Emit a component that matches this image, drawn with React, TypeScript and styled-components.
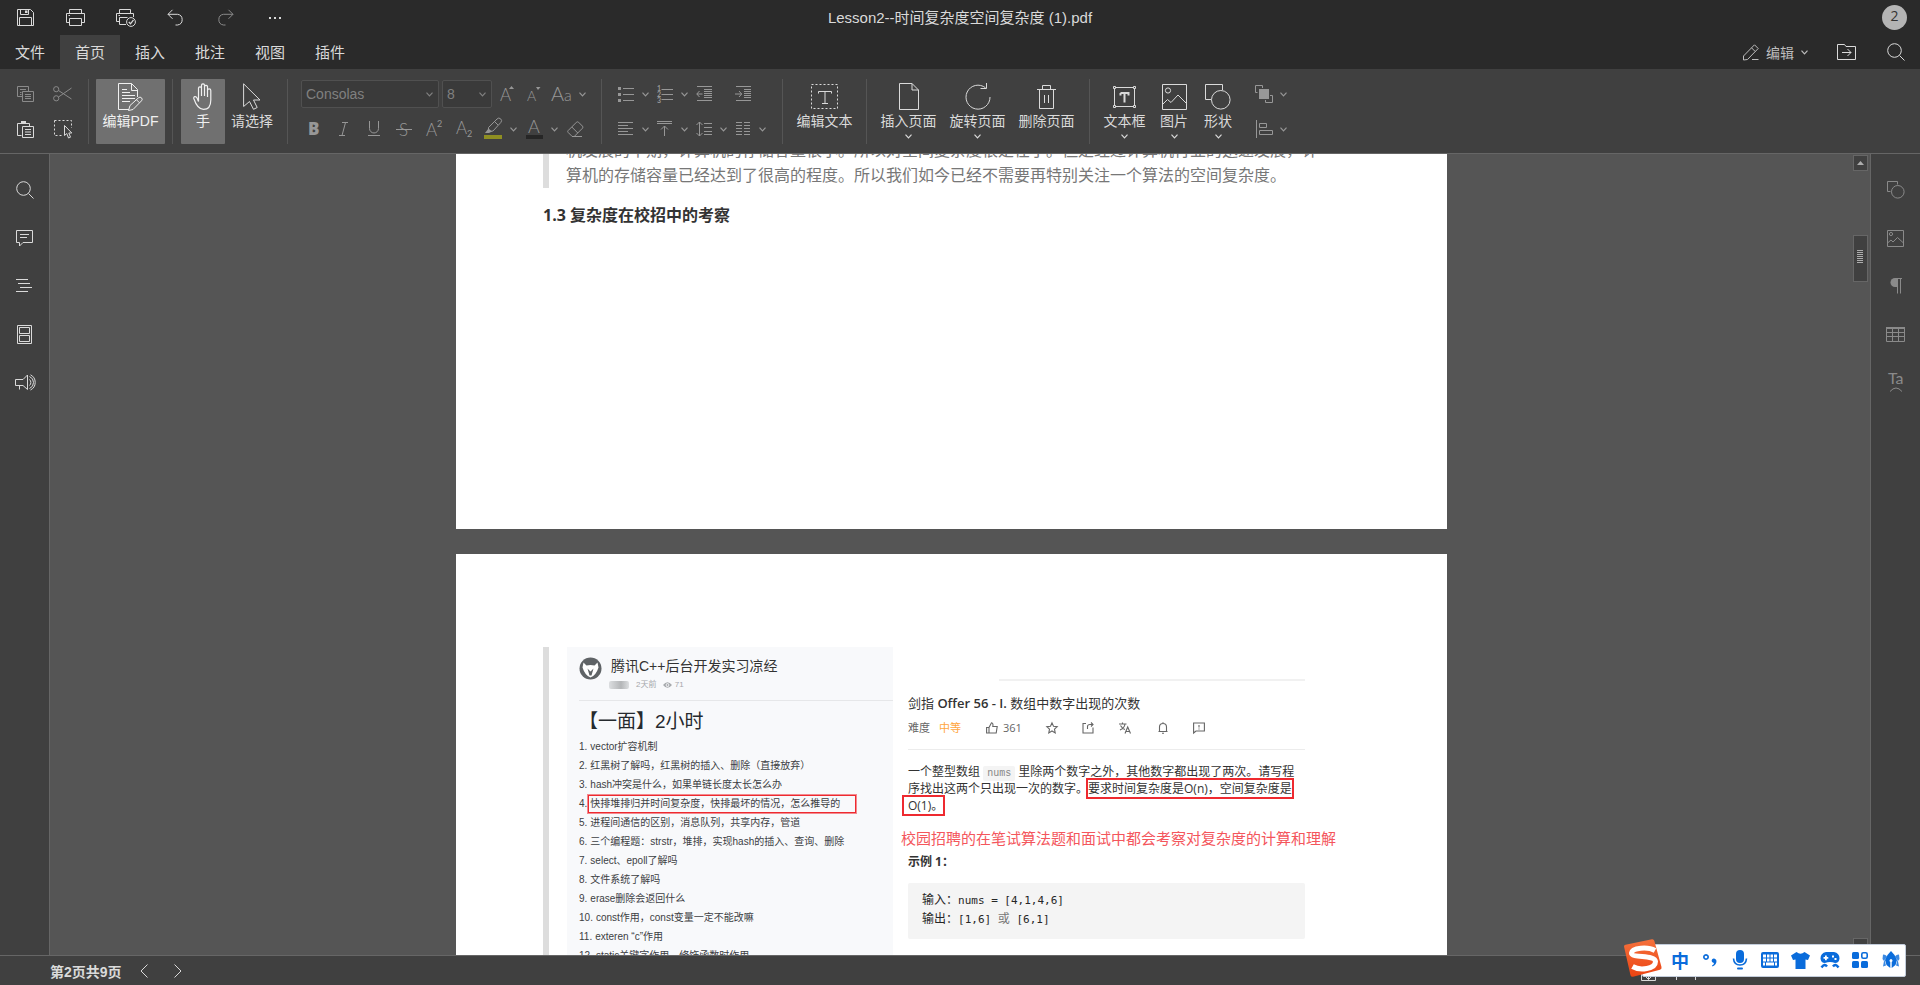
import React from "react";
import styled, { createGlobalStyle, css } from "styled-components";

const c = {
  top: "#2a2a2a",
  bar: "#404040",
  canvas: "#555555",
  line: "#666666",
  text: "#dadada",
  dim: "#979797",
  faint: "#8a8a8a",
  red: "#ee2a30",
  ime: "#0a6cdb",
};

const sans = `"Liberation Sans", "Noto Sans CJK SC", sans-serif`;
const docSans = `"Open Sans", "Noto Sans CJK SC", sans-serif`;

const GlobalStyle = createGlobalStyle`
  * { box-sizing: border-box; }
  body { margin: 0; background: ${c.canvas}; font-family: ${sans}; color: ${c.text}; overflow: hidden; }
  button { font: inherit; color: inherit; background: none; border: 0; padding: 0; margin: 0; }
  h1, h2, h3, p, ol, pre { margin: 0; padding: 0; font-weight: 400; }
  svg { display: block; flex: none; overflow: visible; }
`;

/* ---------- icons ---------- */

type IconProps = { w: number; h: number; children: React.ReactNode; crisp?: boolean };
const Icon = ({ w, h, children, crisp }: IconProps) => (
  <svg
    width={w}
    height={h}
    viewBox={`0 0 ${w} ${h}`}
    fill="none"
    stroke="currentColor"
    strokeWidth={1}
    shapeRendering={crisp ? "crispEdges" : undefined}
    aria-hidden="true"
  >
    {children}
  </svg>
);

const Glyph = styled.text<{ $size: number; $weight?: number; $family?: string }>`
  font-family: ${(p) => p.$family ?? "Lato"}, "Open Sans", sans-serif;
  font-size: ${(p) => p.$size}px;
  font-weight: ${(p) => p.$weight ?? 300};
  fill: currentColor;
  stroke: none;
`;

const Chevron = ({ size = 7 }: { size?: number }) => (
  <svg width={size} height={5} viewBox="0 0 7 5" fill="none" stroke="currentColor" strokeWidth={1.2} aria-hidden="true">
    <path d="M.5 .7 3.5 3.8 6.5 .7" />
  </svg>
);

const SaveIcon = () => (
  <Icon w={17} h={17}>
    <path d="M.5 .5H13.5L16.5 3.5V16.5H.5ZM2.5 16.5V8.5H14.5V16.5M3.5 .5V5.500H11.500V.5" />
    <path d="M8 1.500H10.500V4H8Z" fill="currentColor" stroke="none" />
  </Icon>
);
const PrintIcon = () => (
  <Icon w={19} h={17}>
    <path d="M3.500 4.500V.5H15.500V4.500M3.500 13.500H.5V4.500H18.500V13.500H15.500M3.500 9.500H15.500V16.500H3.500ZM2.500 6.500H4" />
  </Icon>
);
const QuickPrintIcon = () => (
  <Icon w={19} h={18}>
    <path d="M3.500 4.500V.5H14.500V4.500M3.500 12.500H.5V4.500H17.500V8M10 15.500H3.500V8.500H11.500M2.500 6.500H4" />
    <circle cx="15" cy="13" r="4.400" />
    <path d="M12.800 13 14.500 14.800 17.500 10.800" strokeWidth="1.300" />
  </Icon>
);
const UndoIcon = () => (
  <Icon w={17} h={17}>
    <path d="M5.500 .8 1 5.300 5.500 9.800M1 5.300H10.500A5.400 5.400 0 0 1 10.500 16H8.500" />
  </Icon>
);
const RedoIcon = () => (
  <Icon w={17} h={17}>
    <path d="M11.500 .8 16 5.300 11.500 9.800M16 5.300H6.500A5.400 5.400 0 0 0 6.500 16H8.500" />
  </Icon>
);
const MoreIcon = () => (
  <Icon w={12} h={3} crisp>
    <path d="M0 1h2v2H0zM5 1h2v2H5zM10 1h2v2h-2z" fill="currentColor" stroke="none" />
  </Icon>
);
const PencilLineIcon = () => (
  <Icon w={16} h={17}>
    <path d="M.5 12 11.500 .8 15.200 4.500 4.500 15.500.5 16ZM8.500 3.800 12.200 7.500M9 15.500H15.500" />
  </Icon>
);
const FolderIcon = () => (
  <Icon w={19} h={16}>
    <path d="M.5 .5H7.500L9 2.500H18.500V15.500H.5ZM5 8.500H14M10.500 5 14 8.500 10.500 12" />
  </Icon>
);
const SearchIcon = () => (
  <Icon w={18} h={18}>
    <circle cx="7.500" cy="7.500" r="6.800" />
    <path d="M12.500 12.500 17.500 17.500" />
  </Icon>
);
const CopyIcon = () => (
  <Icon w={17} h={17}>
    <path d="M5.500 10.500H.5V.5H11.500V5M3 3.500H9M3 6.500H4.500M3 8.500H4.500M5.500 5.500H16.500V15.500H5.500ZM8 8.500H14M8 10.500H14M8 12.500H14" />
  </Icon>
);
const CutIcon = () => (
  <Icon w={19} h={16}>
    <circle cx="3.200" cy="3.200" r="2.600" />
    <circle cx="3.200" cy="12.300" r="2.600" />
    <path d="M5.500 4.500 18.500 13M5.500 11 18.500 2" />
  </Icon>
);
const PasteIcon = () => (
  <Icon w={17} h={17}>
    <path d="M4.500 14.500H.5V2.500H12.500V5M5.500 5.500H16.500V16.500H5.500ZM8 8.500H14M8 11H14M8 13.500H14" />
    <path d="M4 0h5v3H4z" fill="currentColor" stroke="none" />
  </Icon>
);
const SelectAreaIcon = () => (
  <Icon w={18} h={19}>
    <path d="M.5 .5H17.500V8M.5 .5V15.500H8" strokeDasharray="2 2" />
    <path d="M10.500 5.500V15.500L12.800 13.500 14.500 18 16.500 17.200 14.800 13H17.800Z" />
  </Icon>
);
const EditPdfIcon = () => (
  <Icon w={25} h={28}>
    <path d="M11 26.500H.5V.5H13.500L19.500 6.500V14M13.500 .5V7.500H19.500M4 6.500H9M4 9.500H12M4 12.500H17M4 15.500H17M4 18.500H12" />
    <path d="M10.500 27.500 12 22.500 20.500 14.800A1.800 1.800 0 0 1 23.500 17.800L15 26.500ZM18.500 16.800 21.500 19.800" />
  </Icon>
);
const HandIcon = () => (
  <Icon w={20} h={27}>
    <path d="M5.500 15V5A1.600 1.600 0 0 1 8.500 5V13M8.500 13V2A1.600 1.600 0 0 1 11.500 2V13M11.500 13V3.500A1.600 1.600 0 0 1 14.500 3.500V14M14.500 14V7.500A1.600 1.600 0 0 1 17.800 7.500V17C17.800 23 15 26.400 10.500 26.400C5.500 26.400 3 22 .8 15.500C.3 13.500 3 12.800 4 15L5.500 18.500V15" strokeWidth="1.200" />
  </Icon>
);
const PointerIcon = () => (
  <Icon w={18} h={27}>
    <path d="M.6 .8V23.500L6.500 18.500 10.500 26.300 14.200 24.500 10.500 17H17Z" />
  </Icon>
);
const BulletIcon = () => (
  <Icon w={16} h={17} crisp>
    <path d="M5 2.500H16M5 8.500H16M5 14.500H16" />
    <path d="M0 1h3v3H0zM0 7h3v3H0zM0 13h3v3H0z" fill="currentColor" stroke="none" />
  </Icon>
);
const NumberIcon = () => (
  <Icon w={16} h={19}>
    <path d="M4.500 4.500H16M4.500 9.500H16M4.500 14.500H16" />
    <Glyph $size={7} $weight={700} x="0" y="6">1</Glyph>
    <Glyph $size={7} $weight={700} x="0" y="12">2</Glyph>
    <Glyph $size={7} $weight={700} x="0" y="18">3</Glyph>
  </Icon>
);
const OutdentIcon = () => (
  <Icon w={16} h={16}>
    <path d="M1 .5H16M8 3.500H16M8 5.500H16M8 7.500H16M8 9.500H16M8 11.500H16M1 14.500H16M.8 8H6.500M3.500 5 .8 8 3.500 11" />
  </Icon>
);
const IndentIcon = () => (
  <Icon w={16} h={16}>
    <path d="M1 .5H16M9 3.500H16M9 5.500H16M9 7.500H16M9 9.500H16M9 11.500H16M1 14.500H16M0 8H6.500M4 5 6.700 8 4 11" />
  </Icon>
);
const AlignLeftIcon = () => (
  <Icon w={16} h={14}>
    <path d="M0 .5H15M0 3.500H10M0 6.500H15M0 9.500H10M0 12.500H15" />
  </Icon>
);
const AlignTopIcon = () => (
  <Icon w={16} h={16}>
    <path d="M0 .5H15M0 2.500H15M7.500 5V15M4 8.500 7.500 5 11 8.500" />
  </Icon>
);
const LineSpacingIcon = () => (
  <Icon w={16} h={16}>
    <path d="M3.500 1V15M.5 4 3.500 1 6.500 4M.5 12 3.500 15 6.500 12M8 2.500H16M8 6.500H16M8 10.500H16M8 13.500H16" />
  </Icon>
);
const ColumnsIcon = () => (
  <Icon w={14} h={14}>
    <path d="M0 .5H6M0 3.500H6M0 6.500H6M0 9.500H6M0 12.500H6M8 .5H14M8 3.500H14M8 6.500H14M8 9.500H14M8 12.500H14" />
  </Icon>
);
const GrowIcon = () => (
  <Icon w={16} h={18}>
    <Glyph $size={17} x="0" y="16">A</Glyph>
    <path d="M9 4 11.500 1 14 4Z" fill="currentColor" stroke="none" />
  </Icon>
);
const ShrinkIcon = () => (
  <Icon w={15} h={18}>
    <Glyph $size={14} x="0" y="16">A</Glyph>
    <path d="M9 2 11 5 13.500 2Z" fill="currentColor" stroke="none" />
  </Icon>
);
const CaseIcon = () => (
  <Icon w={22} h={20}>
    <Glyph $size={20} x="0" y="17">A</Glyph>
    <Glyph $size={16} x="13" y="17">a</Glyph>
  </Icon>
);
const BoldIcon = () => (
  <Icon w={14} h={18}>
    <Glyph $size={17} $weight={800} $family='"Open Sans"' x="1" y="15">B</Glyph>
  </Icon>
);
const ItalicIcon = () => (
  <Icon w={12} h={14}>
    <path d="M4 .5H10M1 13.500H7M7.500 .5 4 13.500" />
  </Icon>
);
const UnderlineIcon = () => (
  <Icon w={12} h={16}>
    <path d="M1.500 0V7.500A4.400 4.400 0 0 0 10.500 7.500V0M0 14.500H12" />
  </Icon>
);
const StrikeIcon = () => (
  <Icon w={16} h={17}>
    <Glyph $size={17} x="3" y="15">S</Glyph>
    <path d="M0 8.500H16" />
  </Icon>
);
const SuperIcon = () => (
  <Icon w={17} h={20}>
    <Glyph $size={17} x="0" y="17">A</Glyph>
    <Glyph $size={9} $weight={400} x="11" y="8">2</Glyph>
  </Icon>
);
const SubIcon = () => (
  <Icon w={17} h={20}>
    <Glyph $size={17} x="0" y="15">A</Glyph>
    <Glyph $size={9} $weight={400} x="11" y="18">2</Glyph>
  </Icon>
);
const HighlightIcon = () => (
  <Icon w={18} h={22}>
    <path d="M4.500 9.500 13 1A2.200 2.200 0 0 1 16.800 4.500L9 13 5.500 13.500 4.500 12.500ZM10.500 3.500 14 7" />
    <path d="M1 15 4.500 10.500 8 13.500 5 15Z" fill="currentColor" stroke="none" />
    <path d="M0 17H18V21H0Z" fill="#8f8f22" stroke="none" />
  </Icon>
);
const FontColorIcon = () => (
  <Icon w={17} h={22}>
    <Glyph $size={18} x="2" y="15">A</Glyph>
    <path d="M0 17H17V21H0Z" fill="#262626" stroke="none" />
  </Icon>
);
const EraserIcon = () => (
  <Icon w={17} h={17}>
    <path d="M1.200 9.500 9.500 1.200A1.600 1.600 0 0 1 11.500 1.200L15.500 5.200A1.600 1.600 0 0 1 15.500 7.200L7.200 15.500H5.200L1.200 11.500A1.400 1.400 0 0 1 1.200 9.500ZM4.800 6 10.800 12M5 15.500H15" />
  </Icon>
);
const EditTextIcon = () => (
  <Icon w={27} h={26}>
    <path d="M.5 .5H26.500V24.500H.5Z" strokeDasharray="2 2" />
    <path d="M7.500 9.500V7.500H20.500V9.500M14 7.500V19.500M11 19.500H17" />
  </Icon>
);
const PageIcon = () => (
  <Icon w={20} h={27}>
    <path d="M.5 .5H13L19.500 7V26.500H.5ZM13 .5V7H19.500" />
  </Icon>
);
const RotateIcon = () => (
  <Icon w={26} h={27}>
    <path d="M25 14A12 12 0 1 1 20.500 4.800M21.500 0V5.500H15.500" />
  </Icon>
);
const TrashIcon = () => (
  <Icon w={19} h={24}>
    <path d="M0 4.500H19M5.500 4.500V.5H13.500V4.500M2.500 4.500V23.500H16.500V4.500M7.500 10V18M11.500 10V18" />
  </Icon>
);
const TextBoxIcon = () => (
  <Icon w={25} h={24}>
    <path d="M2.500 2.500H22.500V21.500H2.500Z" />
    <path d="M1.500 1.500H3.500V3.500H1.500ZM21.500 1.500H23.500V3.500H21.500ZM1.500 20.500H3.500V22.500H1.500ZM21.500 20.500H23.500V22.500H21.500Z" fill="#404040" />
    <path d="M8.500 8H16.500V10.500M8.500 8V10.500M12.500 8V17.500" strokeWidth="2" />
  </Icon>
);
const ImageIcon = ({ small }: { small?: boolean }) =>
  small ? (
    <Icon w={17} h={17}>
      <path d="M.5 .5H16.500V16.500H.5ZM.5 13 4 10 6 12 10.500 7.500 16.500 13" />
      <circle cx="4" cy="4" r="1.600" />
    </Icon>
  ) : (
    <Icon w={25} h={26}>
      <path d="M.5 .5H24.500V25.500H.5ZM.5 20.500 5.500 15.500 9 18.500 16 11 24.500 19.500" />
      <circle cx="6" cy="6.500" r="2.600" />
    </Icon>
  );
const ShapeIcon = ({ small }: { small?: boolean }) =>
  small ? (
    <Icon w={17} h={18}>
      <path d="M3.500 10.500H.5V.5H10.500V3.500" />
      <circle cx="10.800" cy="10.800" r="6.300" />
    </Icon>
  ) : (
    <Icon w={26} h={26}>
      <path d="M6 15.500H.5V.5H17.500V6" />
      <circle cx="15.800" cy="15.800" r="9.300" />
    </Icon>
  );
const ArrangeIcon = () => (
  <Icon w={18} h={18}>
    <path d="M2.500 7.500H.5V.5H7.500V3M10.500 15V17.500H17.500V10.500H15" />
    <path d="M4 4H14V14H4Z" fill="currentColor" stroke="none" />
  </Icon>
);
const AlignObjIcon = () => (
  <Icon w={17} h={18}>
    <path d="M.5 0V18M3.500 3.500H10.500V7.500H3.500ZM3.500 10.500H16.500V14.500H3.500Z" />
  </Icon>
);
const CommentIcon = () => (
  <Icon w={17} h={17}>
    <path d="M.5 .5H16.500V12.500H7L3.500 16V12.500H.5ZM4 4.500H13M4 7.500H11" />
  </Icon>
);
const OutlineIcon = () => (
  <Icon w={17} h={14}>
    <path d="M0 .5H12M2 4.500H14M4 8.500H16M0 12.500H12" />
  </Icon>
);
const ThumbsIcon = () => (
  <Icon w={15} h={19}>
    <path d="M.5 .5H14.500V18.500H.5ZM2.500 2.500H12.500V8.500H2.500ZM2.500 10.500H12.500V16.500H2.500Z" />
  </Icon>
);
const SpeakerIcon = () => (
  <Icon w={19} h={17}>
    <path d="M.5 5.500H8L12.500 1V15.500L8 11.500H.5ZM4.500 11.500V15.500M14.500 5.500A4 4 0 0 1 14.500 11.500M14.500 2.500A6.500 6.500 0 0 1 14.500 14.500M15.500 .8A8.500 8.500 0 0 1 15.500 16" />
  </Icon>
);
const ParagraphIcon = () => (
  <Icon w={12} h={16}>
    <path d="M12 .5H5M7.500 .5V15.500M10.500 .5V15.500" />
    <path d="M7 0H5A4.500 4.500 0 0 0 5 9H7Z" fill="currentColor" stroke="none" />
  </Icon>
);
const TableIcon = () => (
  <Icon w={19} h={15}>
    <path d="M.5 1V14.500H18.500V1M.5 5.500H18.500M.5 9.500H18.500M6.500 2V14M12.500 2V14" />
    <path d="M0 0H19V2H0Z" fill="currentColor" stroke="none" />
  </Icon>
);
const TextArtIcon = () => (
  <Icon w={15} h={20}>
    <Glyph $size={16} $weight={400} x="0" y="12">Ta</Glyph>
    <path d="M2 19.500Q8 12.500 14 19.500" />
  </Icon>
);

/* ---------- shell ---------- */

const Shell = styled.div`
  position: relative;
  display: flex;
  flex-direction: column;
  height: 100vh;
  overflow: hidden;
`;

const TitleBar = styled.header`
  display: grid;
  grid-template-columns: 1fr auto 1fr;
  align-items: center;
  flex: none;
  height: 35px;
  background: ${c.top};
`;
const DocTitle = styled.h1`
  font-size: 15px;
  line-height: 20px;
`;
const Row = styled.div<{ $end?: boolean }>`
  display: flex;
  align-items: center;
  justify-content: ${(p) => (p.$end ? "flex-end" : "flex-start")};
`;
const SquareButton = styled.button<{ $w?: number; $h?: number; $off?: boolean }>`
  display: flex;
  align-items: center;
  justify-content: center;
  flex: none;
  width: ${(p) => p.$w ?? 50}px;
  height: ${(p) => p.$h ?? 34}px;
  color: ${(p) => (p.$off ? c.faint : "inherit")};
`;
const Avatar = styled.button`
  width: 25px;
  height: 25px;
  margin-right: 13px;
  border-radius: 50%;
  background: #b4b4b4;
  color: #333;
  font: 14px/20px "Open Sans", sans-serif;
  padding-bottom: 3px;
`;

const TabBar = styled.nav`
  display: flex;
  flex: none;
  height: 34px;
  background: ${c.top};
`;
const Tab = styled.button<{ $active?: boolean }>`
  width: 60px;
  padding-bottom: 2px;
  font-size: 15px;
  background: ${(p) => (p.$active ? c.bar : "transparent")};
`;
const Spacer = styled.div`
  flex: 1;
`;
const ModeButton = styled.button`
  display: flex;
  align-items: center;
  gap: 7px;
  padding-right: 13px;
  font-size: 14px;
  color: #bdbdbd;
`;

const Ribbon = styled.section`
  display: flex;
  flex: none;
  height: 85px;
  padding: 10px 0 9px;
  background: ${c.bar};
  border-bottom: 1px solid ${c.line};
`;
const Divider = styled.div`
  flex: none;
  width: 1px;
  background: #555;
`;
const ToolGroup = styled.div<{ $pad?: string }>`
  display: flex;
  flex: none;
  padding: 0 ${(p) => p.$pad ?? "8px"};
`;
const ClipboardGrid = styled.div`
  display: grid;
  grid-template-columns: 37px 37px;
  grid-template-rows: 30px 30px;
  gap: 5px 0;
  padding: 0 7px;
`;
const ToolRows = styled.div<{ $pad: string }>`
  display: flex;
  flex: none;
  flex-direction: column;
  gap: 5px;
  padding: 0 ${(p) => p.$pad};
  color: ${c.dim};
`;
const ToolRow = styled.div<{ $indent?: number }>`
  display: flex;
  align-items: center;
  height: 30px;
  padding-left: ${(p) => p.$indent ?? 0}px;
`;
const SplitTool = styled.button<{ $icon: number }>`
  display: grid;
  grid-template-columns: ${(p) => p.$icon}px 13px;
  align-items: center;
  justify-items: center;
  flex: none;
  height: 30px;
`;
const BigButton = styled.button<{ $w: number; $active?: boolean }>`
  display: flex;
  flex-direction: column;
  align-items: center;
  flex: none;
  width: ${(p) => p.$w}px;
  height: 65px;
  font-size: 14px;
  border-radius: 1px;
  ${(p) =>
    p.$active &&
    css`
      background: #707070;
      color: #f0f0f0;
    `}
`;
const BigIcon = styled.span`
  display: flex;
  align-items: center;
  height: 35px;
`;
const BigLabel = styled.span`
  line-height: 14px;
  height: 20px;
  white-space: nowrap;
`;

const Combo = styled.label<{ $w: number }>`
  position: relative;
  display: flex;
  align-items: center;
  width: ${(p) => p.$w}px;
  height: 28px;
  margin-right: 3px;
  border: 1px solid #505050;
  border-radius: 2px;
  background: #3a3a3a;
  color: #808080;
`;
const ComboSelect = styled.select`
  appearance: none;
  width: 100%;
  height: 26px;
  padding: 0 4px;
  border: 0;
  background: transparent;
  color: inherit;
  font: 14px "Liberation Sans", sans-serif;
`;
const ComboArrow = styled.span`
  position: absolute;
  right: 5px;
  top: 11px;
  pointer-events: none;
`;

/* ---------- work area ---------- */

const Work = styled.div`
  display: flex;
  flex: 1;
  min-height: 0;
`;
const Rail = styled.nav<{ $right?: boolean }>`
  flex: none;
  width: 50px;
  padding-top: 12px;
  background: ${c.bar};
  color: ${(p) => (p.$right ? c.faint : c.text)};
  border-${(p) => (p.$right ? "left" : "right")}: 1px solid ${c.line};
`;
const Viewer = styled.main`
  flex: 1;
  min-width: 0;
  overflow: hidden;
  background: ${c.canvas};
`;
const PageStack = styled.div`
  display: flex;
  flex-direction: column;
  align-items: center;
  gap: 25px;
  margin-top: -16px;
`;
const Sheet = styled.article<{ $h: number; $top?: number }>`
  flex: none;
  width: 991px;
  height: ${(p) => p.$h}px;
  padding: ${(p) => p.$top ?? 0}px 87px 0;
  background: #fff;
  color: #333;
  font-family: ${docSans};
`;
const Quote = styled.blockquote`
  margin: 0;
  padding-left: 17px;
  border-left: 6px solid #dddddd;
  color: #777;
  font-size: 16px;
  line-height: 25px;
  white-space: nowrap;
`;
const SectionTitle = styled.h2`
  margin-top: 15px;
  font-size: 16px;
  line-height: 25px;
  font-weight: 700;
`;
const Figure = styled.div`
  display: flex;
  height: 100%;
  padding-left: 18px;
  border-left: 6px solid #dddddd;
`;
const ForumCard = styled.section`
  flex: none;
  width: 326px;
  padding: 9px 0 0 12px;
  background: #f8f9fb;
  font-family: ${sans};
  white-space: nowrap;
`;
const ForumHead = styled.header`
  display: flex;
  gap: 9px;
  height: 45px;
  border-bottom: 1px solid #e6e7e9;
`;
const ForumTitle = styled.h2`
  font-size: 14px;
  line-height: 20px;
`;
const ForumMeta = styled.div`
  display: flex;
  align-items: center;
  gap: 7px;
  height: 18px;
  margin-left: -2px;
  font-size: 8px;
  line-height: 18px;
  color: #a5a8ab;
`;
const BlurName = styled.span`
  width: 20px;
  height: 8px;
  border-radius: 2px;
  background: linear-gradient(90deg, #dcdee0, #b4b6b8 60%, #dcdee0);
`;
const RoundHeading = styled.h3`
  padding: 8px 0 2px;
  font-size: 19px;
  line-height: 26px;
  color: #262a2e;
`;
const Questions = styled.ol`
  list-style: none;
  font-size: 10px;
  line-height: 19px;
  color: #3c4043;
`;
const Question = styled.li`
  display: flex;
  align-items: center;
  gap: 3px;
  height: 19px;
`;
const BoxedQuestion = styled.mark`
  min-width: 268px;
  height: 18px;
  margin-left: -2px;
  padding-left: 1px;
  border: 1px solid ${c.red};
  outline: 1px solid #ee2a3088;
  background: none;
  color: inherit;
  line-height: 16px;
`;
const Problem = styled.section`
  width: 397px;
  flex: none;
  margin-left: 15px;
  padding-top: 32px;
  font-family: ${docSans};
  color: #333;
  white-space: nowrap;
`;
const TopRule = styled.div`
  height: 2px;
  margin-left: 91px;
  background: #f1f1f1;
`;
const ProblemTitle = styled.h2`
  margin-top: 12px;
  font-size: 13px;
  line-height: 20px;
`;
const Medium = styled.span`
  font-weight: 600;
`;
const ProblemMeta = styled.div`
  display: grid;
  grid-template-columns: 31px 47px 17px 43px 36px 37px 38px 36px 1fr;
  align-items: center;
  height: 34px;
  padding-bottom: 10px;
  margin-top: 3px;
  border-bottom: 1px solid #ececec;
  font-size: 11px;
  line-height: 16px;
  color: #666;
`;
const Level = styled.span`
  color: #ffa640;
`;
const Statement = styled.p`
  margin-top: 13px;
  font-size: 12px;
  line-height: 17px;
`;
const InlineCode = styled.code`
  padding: 2px 4px;
  border-radius: 2px;
  background: #f4f4f4;
  color: #888;
  font: 10px/12px "Liberation Mono", monospace;
`;
const Boxed = styled.mark<{ $lead?: boolean }>`
  background: none;
  color: inherit;
  outline: 2px solid ${c.red};
  padding-left: ${(p) => (p.$lead ? 4 : 0)}px;
  margin-left: ${(p) => (p.$lead ? -4 : 0)}px;
`;
const Note = styled.p`
  margin: 14px 0 0 -7px;
  font-size: 15px;
  line-height: 22px;
  color: #f4565c;
  font-family: "Liberation Serif", "Noto Sans CJK SC", serif;
`;
const ExampleTitle = styled.h3`
  margin-top: 2px;
  font-size: 12px;
  line-height: 20px;
  font-weight: 700;
`;
const Example = styled.pre`
  margin-top: 11px;
  padding: 8px 14px 10px;
  border-radius: 2px;
  background: #f4f4f4;
  color: #262626;
  font: 11px/19px "DejaVu Sans Mono", "Noto Sans CJK SC", monospace;
`;
const Cjk = styled.span<{ $soft?: boolean }>`
  font-size: 12px;
  color: ${(p) => (p.$soft ? "#777" : "inherit")};
`;

const ScrollTrack = styled.div`
  display: flex;
  flex-direction: column;
  flex: none;
  width: 17px;
  padding: 1px 2px 1px 0;
  background: ${c.canvas};
`;
const ScrollPart = styled.button<{ $h: number }>`
  display: flex;
  align-items: center;
  justify-content: center;
  flex: none;
  width: 15px;
  height: ${(p) => p.$h}px;
  padding-bottom: 1px;
  border: 1px solid ${c.line};
  background: ${c.bar};
  color: #adadad;
`;
const TrackGap = styled.div`
  flex: none;
  height: 64px;
`;

const StatusBar = styled.footer`
  display: flex;
  align-items: center;
  flex: none;
  height: 30px;
  padding: 1px 0 0 50px;
  background: ${c.bar};
  border-top: 1px solid ${c.line};
`;
const PageLabel = styled.button`
  margin-right: 7px;
  font-size: 14px;
  font-weight: 700;
`;
const ZoomTools = styled.div`
  display: flex;
  align-items: center;
  gap: 20px;
  margin-right: 224px;
`;

/* ---------- input method bar ---------- */

const ImeBar = styled.aside`
  position: absolute;
  right: 14px;
  bottom: 8px;
  display: flex;
  align-items: center;
  height: 33px;
  padding-left: 22px;
  border: 1px solid #c3cddb;
  border-radius: 2px;
  background: #fff;
  color: ${c.ime};
`;
const ImeLogo = styled.span`
  position: absolute;
  left: -22px;
  top: -7px;
`;
const ImeButton = styled.button`
  display: flex;
  align-items: center;
  justify-content: center;
  width: 30px;
  height: 31px;
  padding-bottom: 1px;
  font: 700 18px/28px "Noto Sans CJK SC", sans-serif;
`;

const Solid = ({ w, h, children }: IconProps) => (
  <svg width={w} height={h} viewBox={`0 0 ${w} ${h}`} fill="currentColor" aria-hidden="true">
    {children}
  </svg>
);

const Small = ({ children }: { children: React.ReactNode }) => (
  <svg width={12} height={12} viewBox="0 0 12 12" fill="none" stroke="#666" strokeWidth={1.1} aria-hidden="true">
    {children}
  </svg>
);

const Big = ({ w, label, icon, active, menu }: { w: number; label: string; icon: React.ReactNode; active?: boolean; menu?: boolean }) => (
  <BigButton $w={w} $active={active} type="button">
    <BigIcon>{icon}</BigIcon>
    <BigLabel>{label}</BigLabel>
    {menu && <Chevron />}
  </BigButton>
);

const Split = ({ label, icon, size = 26 }: { label: string; icon: React.ReactNode; size?: number }) => (
  <SplitTool $icon={size} type="button" aria-label={label}>
    {icon}
    <Chevron />
  </SplitTool>
);

const questions: React.ReactNode[] = [
  "vector扩容机制",
  "红黑树了解吗，红黑树的插入、删除（直接放弃）",
  "hash冲突是什么，如果单链长度太长怎么办",
  <BoxedQuestion key="q4">快排堆排归并时间复杂度，快排最坏的情况，怎么推导的</BoxedQuestion>,
  "进程间通信的区别，消息队列，共享内存，管道",
  "三个编程题：strstr，堆排，实现hash的插入、查询、删除",
  "select、epoll了解吗",
  "文件系统了解吗",
  "erase删除会返回什么",
  "const作用，const变量一定不能改嘛",
  "exteren “c”作用",
  "static关键字作用，修饰函数时作用",
];

export default function App() {
  return (
    <Shell>
      <GlobalStyle />
      <TitleBar>
        <Row>
          <SquareButton aria-label="保存"><SaveIcon /></SquareButton>
          <SquareButton aria-label="打印"><PrintIcon /></SquareButton>
          <SquareButton aria-label="快速打印"><QuickPrintIcon /></SquareButton>
          <SquareButton aria-label="撤销"><UndoIcon /></SquareButton>
          <SquareButton aria-label="重做" $off><RedoIcon /></SquareButton>
          <SquareButton aria-label="更多"><MoreIcon /></SquareButton>
        </Row>
        <DocTitle>Lesson2--时间复杂度空间复杂度 (1).pdf</DocTitle>
        <Row $end><Avatar>2</Avatar></Row>
      </TitleBar>

      <TabBar>
        {["文件", "首页", "插入", "批注", "视图", "插件"].map((t) => (
          <Tab key={t} $active={t === "首页"}>{t}</Tab>
        ))}
        <Spacer />
        <ModeButton><PencilLineIcon />编辑<Chevron /></ModeButton>
        <SquareButton aria-label="打开文件位置"><FolderIcon /></SquareButton>
        <SquareButton aria-label="查找" $w={49}><SearchIcon /></SquareButton>
      </TabBar>

      <Ribbon>
        <ClipboardGrid>
          <SquareButton $w={37} $h={30} $off aria-label="复制"><CopyIcon /></SquareButton>
          <SquareButton $w={37} $h={30} $off aria-label="剪切"><CutIcon /></SquareButton>
          <SquareButton $w={37} $h={30} aria-label="粘贴"><PasteIcon /></SquareButton>
          <SquareButton $w={37} $h={30} aria-label="选择区域"><SelectAreaIcon /></SquareButton>
        </ClipboardGrid>
        <Divider />
        <ToolGroup $pad="7px">
          <Big w={69} label="编辑PDF" icon={<EditPdfIcon />} active />
        </ToolGroup>
        <Divider />
        <ToolGroup>
          <Big w={44} label="手" icon={<HandIcon />} active />
          <Big w={54} label="请选择" icon={<PointerIcon />} />
        </ToolGroup>
        <Divider />
        <ToolRows $pad="12px 0 11px">
          <ToolRow $indent={2}>
            <Combo $w={138}>
              <ComboSelect aria-label="字体"><option>Consolas</option></ComboSelect>
              <ComboArrow><Chevron /></ComboArrow>
            </Combo>
            <Combo $w={50}>
              <ComboSelect aria-label="字号"><option>8</option></ComboSelect>
              <ComboArrow><Chevron /></ComboArrow>
            </Combo>
            <SquareButton $w={25} $h={30} aria-label="增大字号"><GrowIcon /></SquareButton>
            <SquareButton $w={28} $h={30} aria-label="减小字号"><ShrinkIcon /></SquareButton>
            <Split label="更改大小写" size={28} icon={<CaseIcon />} />
          </ToolRow>
          <ToolRow>
            <SquareButton $w={30} $h={30} aria-label="加粗"><BoldIcon /></SquareButton>
            <SquareButton $w={30} $h={30} aria-label="斜体"><ItalicIcon /></SquareButton>
            <SquareButton $w={30} $h={30} aria-label="下划线"><UnderlineIcon /></SquareButton>
            <SquareButton $w={30} $h={30} aria-label="删除线"><StrikeIcon /></SquareButton>
            <SquareButton $w={30} $h={30} aria-label="上标"><SuperIcon /></SquareButton>
            <SquareButton $w={30} $h={30} aria-label="下标"><SubIcon /></SquareButton>
            <Split label="突出显示" size={28} icon={<HighlightIcon />} />
            <Split label="字体颜色" size={28} icon={<FontColorIcon />} />
            <SquareButton $w={28} $h={30} aria-label="清除格式"><EraserIcon /></SquareButton>
          </ToolRow>
        </ToolRows>
        <Divider />
        <ToolRows $pad="13px 0 11px">
          <ToolRow>
            <Split label="项目符号" icon={<BulletIcon />} />
            <Split label="编号" icon={<NumberIcon />} />
            <SquareButton $w={26} $h={30} aria-label="减少缩进"><OutdentIcon /></SquareButton>
            <SquareButton $w={52} $h={30} aria-label="增加缩进"><IndentIcon /></SquareButton>
          </ToolRow>
          <ToolRow>
            <Split label="水平对齐" icon={<AlignLeftIcon />} />
            <Split label="垂直对齐" icon={<AlignTopIcon />} />
            <Split label="行距" icon={<LineSpacingIcon />} />
            <Split label="分栏" icon={<ColumnsIcon />} />
          </ToolRow>
        </ToolRows>
        <Divider />
        <Big w={83} label="编辑文本" icon={<EditTextIcon />} />
        <Divider />
        <ToolGroup $pad="8px 0 7px">
          <Big w={69} label="插入页面" icon={<PageIcon />} menu />
          <Big w={69} label="旋转页面" icon={<RotateIcon />} menu />
          <Big w={69} label="删除页面" icon={<TrashIcon />} />
        </ToolGroup>
        <Divider />
        <ToolGroup $pad="7px">
          <Big w={55} label="文本框" icon={<TextBoxIcon />} menu />
          <Big w={44} label="图片" icon={<ImageIcon />} menu />
          <Big w={44} label="形状" icon={<ShapeIcon />} menu />
        </ToolGroup>
        <ToolRows $pad="4px">
          <ToolRow><Split label="排列" icon={<ArrangeIcon />} /></ToolRow>
          <ToolRow><Split label="对齐对象" icon={<AlignObjIcon />} /></ToolRow>
        </ToolRows>
      </Ribbon>

      <Work>
        <Rail aria-label="左侧面板">
          <SquareButton $w={49} $h={48} aria-label="查找"><SearchIcon /></SquareButton>
          <SquareButton $w={49} $h={48} aria-label="批注"><CommentIcon /></SquareButton>
          <SquareButton $w={49} $h={48} aria-label="标题"><OutlineIcon /></SquareButton>
          <SquareButton $w={49} $h={48} aria-label="缩略图"><ThumbsIcon /></SquareButton>
          <SquareButton $w={49} $h={48} aria-label="反馈"><SpeakerIcon /></SquareButton>
        </Rail>

        <Viewer>
          <PageStack>
            <Sheet $h={391}>
              <Quote>
                机发展的早期，计算机的存储容量很小。所以对空间复杂度很是在乎。但是经过计算机行业的迅速发展，计
                <br />
                算机的存储容量已经达到了很高的程度。所以我们如今已经不需要再特别关注一个算法的空间复杂度。
              </Quote>
              <SectionTitle>1.3 复杂度在校招中的考察</SectionTitle>
            </Sheet>

            <Sheet $h={1402} $top={93}>
              <Figure>
                <ForumCard>
                  <ForumHead>
                    <svg width={23} height={23} viewBox="0 0 23 23" aria-hidden="true">
                      <circle cx="11.500" cy="12.500" r="11" fill="#5f6366" />
                      <path d="M4.500 6.500 7.500 9.500Q11.500 8.500 15.500 9.500L18.500 6.500 19.500 11.500Q17 19.500 11.500 21.500Q6 19.500 3.500 11.500Z" fill="#fff" />
                      <path d="M8.500 12.500 11.500 15.500 14.500 12.500 12.500 19.500H10.500Z" fill="#5f6366" />
                    </svg>
                    <div>
                      <ForumTitle>腾讯C++后台开发实习凉经</ForumTitle>
                      <ForumMeta>
                        <BlurName />
                        <span>2天前</span>
                        <Row>
                          <Solid w={9} h={8}>
                            <path d="M0 4Q4.500-1.500 9 4Q4.500 9.500 0 4ZM4.500 2.200A1.800 1.800 0 1 0 4.510 2.200Z" fillRule="evenodd" />
                            <circle cx="4.500" cy="4" r="1" />
                          </Solid>
                          <span>&nbsp;71</span>
                        </Row>
                      </ForumMeta>
                    </div>
                  </ForumHead>
                  <RoundHeading>【一面】2小时</RoundHeading>
                  <Questions>
                    {questions.map((q, i) => (
                      <Question key={i}>
                        <span>{i + 1}.</span>
                        {typeof q === "string" ? <span>{q}</span> : q}
                      </Question>
                    ))}
                  </Questions>
                </ForumCard>

                <Problem>
                  <TopRule />
                  <ProblemTitle>剑指 <Medium>Offer 56 - I.</Medium> 数组中数字出现的次数</ProblemTitle>
                  <ProblemMeta>
                    <span>难度</span>
                    <Level>中等</Level>
                    <Small><path d="M.6 5.500H3V11H.6ZM3 5.500 5.500 .8Q7.500 1 6.800 4.500H11.200L10.200 11H3" /></Small>
                    <span>361</span>
                    <Small><path d="M6 .9 7.500 4.300 11.200 4.700 8.500 7.200 9.200 10.900 6 9 2.800 10.900 3.500 7.200.8 4.700 4.500 4.300Z" /></Small>
                    <Small><path d="M4 1.500H1V11H11V5.500M5.500 7V4.500Q5.500 2.500 8 2.500H11M9 .5 11 2.500 9 4.500" /></Small>
                    <Small><path d="M0 2H7.500M3.500 .5V2M1 8Q5.500 6 6 2M1.500 3.500Q3.500 7 6 7.500M6 11.500 8.700 5 11.500 11.500M7 9.500H10.500" /></Small>
                    <Small><path d="M1.500 9.500H10.500M2.500 9.500V5Q2.500 1.500 6 1.500Q9.500 1.500 9.500 5V9.500M6 .3V1.500M5 11.200H7" /></Small>
                    <Small><path d="M.6 1H11.400V9H3L.6 11ZM6 3V5.500M6 6.500V7.500" /></Small>
                  </ProblemMeta>
                  <Statement>
                    一个整型数组 <InlineCode>nums</InlineCode> 里除两个数字之外，其他数字都出现了两次。请写程
                    <br />
                    序找出这两个只出现一次的数字。<Boxed>要求时间复杂度是O(n)，空间复杂度是</Boxed>
                    <br />
                    <Boxed $lead>O(1)。</Boxed>
                  </Statement>
                  <Note>校园招聘的在笔试算法题和面试中都会考察对复杂度的计算和理解</Note>
                  <ExampleTitle>示例 1：</ExampleTitle>
                  <Example>
                    <Cjk>输入：</Cjk>nums = [4,1,4,6]{"\n"}
                    <Cjk>输出：</Cjk>[1,6] <Cjk $soft>或</Cjk> [6,1]
                  </Example>
                </Problem>
              </Figure>
            </Sheet>
          </PageStack>
        </Viewer>

        <ScrollTrack>
          <ScrollPart $h={16} aria-label="向上滚动">
            <Solid w={7} h={4}><path d="M0 4 3.500 0 7 4Z" /></Solid>
          </ScrollPart>
          <TrackGap />
          <ScrollPart $h={47} aria-label="滚动条">
            <Icon w={7} h={16} crisp>
              <path d="M0 .5H6M0 2.500H6M0 4.500H6M0 6.500H6M0 8.500H6M0 10.500H6M0 12.500H6" />
            </Icon>
          </ScrollPart>
          <Spacer />
          <ScrollPart $h={16} aria-label="向下滚动">
            <Solid w={7} h={4}><path d="M0 0 3.500 4 7 0Z" /></Solid>
          </ScrollPart>
        </ScrollTrack>

        <Rail $right aria-label="右侧面板">
          <SquareButton $w={49} $h={48} aria-label="形状设置"><ShapeIcon small /></SquareButton>
          <SquareButton $w={49} $h={48} aria-label="图片设置"><ImageIcon small /></SquareButton>
          <SquareButton $w={49} $h={48} aria-label="段落设置"><ParagraphIcon /></SquareButton>
          <SquareButton $w={49} $h={48} aria-label="表格设置"><TableIcon /></SquareButton>
          <SquareButton $w={49} $h={48} aria-label="艺术字设置"><TextArtIcon /></SquareButton>
        </Rail>
      </Work>

      <StatusBar>
        <PageLabel>第2页共9页</PageLabel>
        <SquareButton $w={30} $h={26} aria-label="上一页">
          <Icon w={8} h={14}><path d="M7.500 .5 1 7 7.500 13.500" /></Icon>
        </SquareButton>
        <SquareButton $w={38} $h={26} aria-label="下一页">
          <Icon w={8} h={14}><path d="M.5 .5 7 7 .5 13.500" /></Icon>
        </SquareButton>
        <Spacer />
        <ZoomTools>
          <Icon w={15} h={20}><path d="M.5 3.500H14.500V19.500H.5ZM4 15.500H11M7.500 8V18.500M5 16 7.500 18.500 10 16" /></Icon>
          <Icon w={20} h={18}><path d="M.5 0V18M19.500 0V18" /></Icon>
        </ZoomTools>
      </StatusBar>

      <ImeBar aria-label="输入法">
        <ImeLogo>
          <svg width={42} height={40} viewBox="0 0 42 40" aria-hidden="true">
            <defs>
              <linearGradient id="sogou" x1="0" y1="0" x2="0" y2="1">
                <stop offset="0" stopColor="#f5713c" />
                <stop offset="1" stopColor="#ec4413" />
              </linearGradient>
            </defs>
            <path d="M3 8.500Q3 7 4.500 6.700L31 1.200Q32.800 1 33.300 2.700L40.500 29Q41 31 39 31.800L12 38.800Q10 39 9.500 37.200Z" fill="url(#sogou)" />
            <path d="M34 12.500C27 8.500 11 9.500 10.500 15C10.500 20.500 34 16.500 34.500 23.500C34.500 31 19 33 11.500 28.500" fill="none" stroke="#fff" strokeWidth="5" />
          </svg>
        </ImeLogo>
        <ImeButton>中</ImeButton>
        <ImeButton aria-label="标点">
          <Solid w={14} h={13}>
            <path d="M3 0A3 3 0 1 0 3.010 0ZM3 1.700A1.300 1.300 0 1 1 2.990 1.700Z" fillRule="evenodd" />
            <path d="M9 5.500A2.500 2.500 0 0 1 13.500 7Q13.500 10.500 9.500 12.500L9 11.500Q11 10.500 11 9A2.300 2.300 0 0 1 9 5.500Z" />
          </Solid>
        </ImeButton>
        <ImeButton aria-label="语音">
          <Solid w={16} h={20}>
            <rect x="4" y="0" width="8" height="13" rx="4" />
            <path d="M1.500 8.500Q2 15 8 15Q14 15 14.500 8.500" fill="none" stroke="currentColor" strokeWidth="1.600" />
            <rect x="5" y="17.500" width="6" height="2" rx="1" />
          </Solid>
        </ImeButton>
        <ImeButton aria-label="软键盘">
          <Solid w={18} h={16}>
            <path fillRule="evenodd" d="M2 0H16Q18 0 18 2V14Q18 16 16 16H2Q0 16 0 14V2Q0 0 2 0ZM2 2.500V5.500H5V2.500ZM6 2.500V5.500H8.500V2.500ZM9.500 2.500V5.500H12V2.500ZM13 2.500V5.500H16V2.500ZM2 6.500V9.500H5V6.500ZM6 6.500V9.500H8.500V6.500ZM9.500 6.500V9.500H12V6.500ZM13 6.500V9.500H16V6.500ZM2 10.500V13.500H4V10.500ZM5 10.500V13.500H13V10.500ZM14 10.500V13.500H16V10.500Z" />
          </Solid>
        </ImeButton>
        <ImeButton aria-label="皮肤">
          <Solid w={19} h={17}>
            <path d="M5.500 0Q9.500 3.500 13.500 0L19 3.500 17 8 14.500 7.500V17H4.500V7.500L2 8 0 3.500Z" />
          </Solid>
        </ImeButton>
        <ImeButton aria-label="游戏">
          <Solid w={20} h={17}>
            <path fillRule="evenodd" d="M6 0H14Q19.500 1 19.500 6.500Q19 11 15 11Q10 9 5 11Q1 11 .5 6.500Q.5 1 6 0ZM5 3.500V5H3.500V6.800H5V8.300H6.800V6.800H8.300V5H6.800V3.500ZM12 3.500V5.500H14V3.500ZM14.500 6V8H16.500V6Z" />
            <path d="M1.500 15.500Q4.500 11 7 14.500M18.500 15.500Q15.500 11 13 14.500" fill="none" stroke="currentColor" strokeWidth="2.400" />
          </Solid>
        </ImeButton>
        <ImeButton aria-label="工具箱">
          <Solid w={16} h={16}>
            <rect width="7" height="7" rx="1.500" />
            <rect y="9" width="7" height="7" rx="1.500" />
            <rect x="9" y="9" width="7" height="7" rx="1.500" />
            <rect x="9.800" y=".8" width="5.400" height="5.400" rx="1.500" fill="none" stroke="currentColor" strokeWidth="1.600" />
          </Solid>
        </ImeButton>
        <ImeButton aria-label="智能助手">
          <Solid w={17} h={18}>
            <path fillRule="evenodd" d="M9 0 12.500 4 15 9 13.500 14 9.700 17V11A1.500 1.500 0 1 0 8.300 11V17L4.500 14 3 9 5.500 4Z" />
            <path d="M1 3.500Q4.500 3.500 5 6L2.500 9 4 14.500 1 15.500 2 10 .5 8ZM17 3.500Q13.500 3.500 13 6L15.500 9 14 14.500 17 15.500 16 10 17.500 8Z" opacity=".8" />
          </Solid>
        </ImeButton>
      </ImeBar>
    </Shell>
  );
}
